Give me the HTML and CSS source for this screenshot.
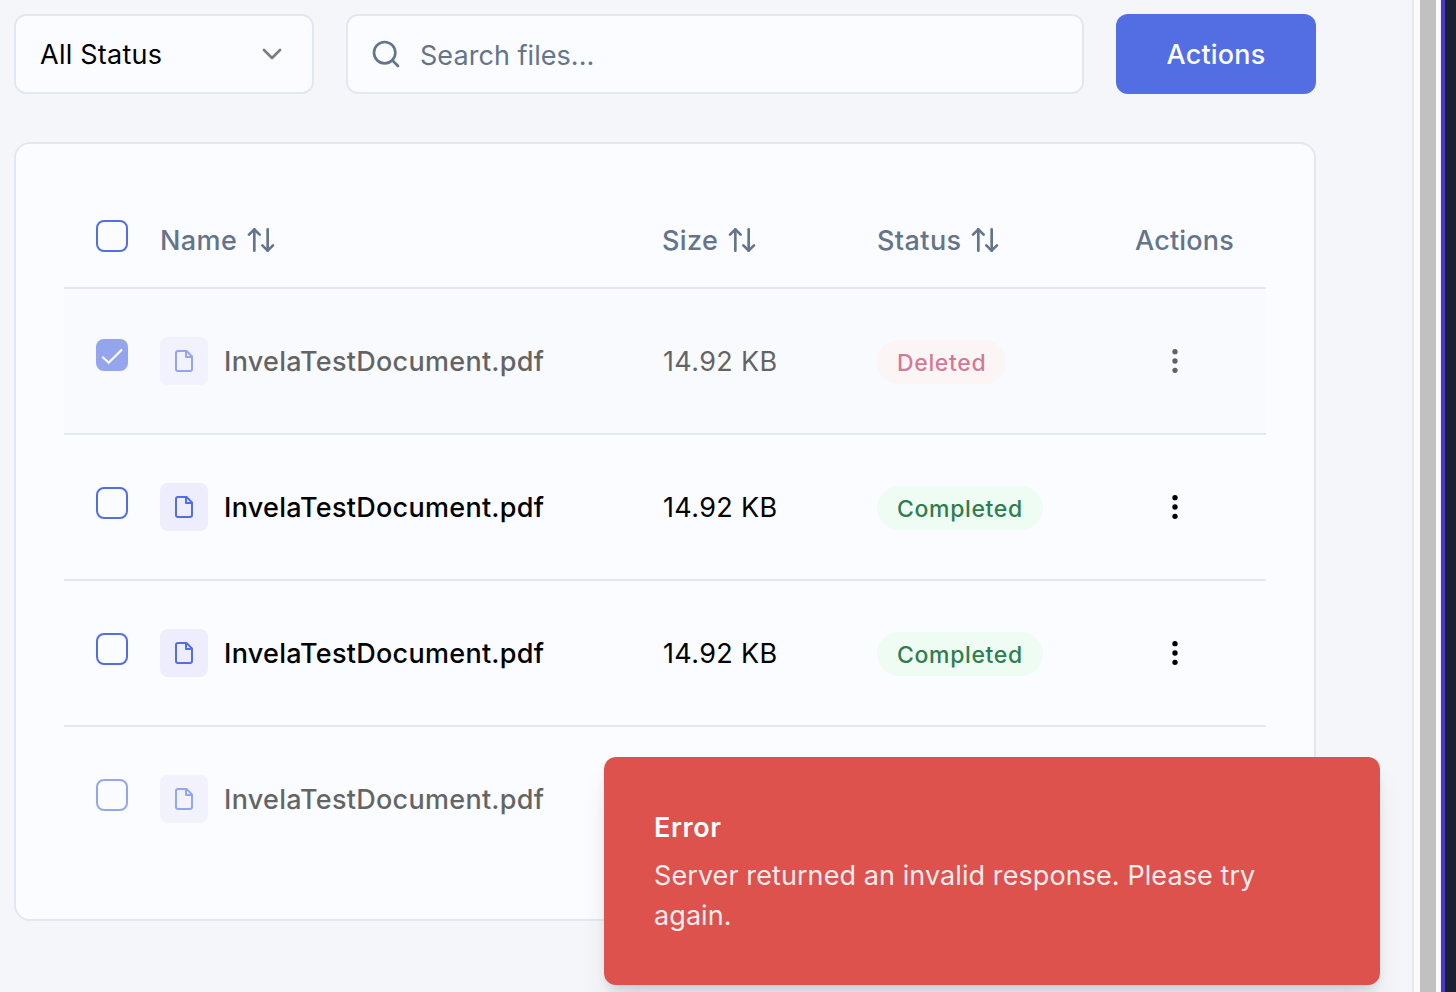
FILE: index.html
```
<!DOCTYPE html>
<html lang="en">
<head>
<meta charset="utf-8">
<title>Files</title>
<link rel="stylesheet" href="styles.css">
</head>
<body>
<svg class="sprite" aria-hidden="true">
  <symbol id="sort" viewBox="0 0 24 24"><path d="m21 16-4 4-4-4"/><path d="M17 20V4"/><path d="m3 8 4-4 4 4"/><path d="M7 4v16"/></symbol>
  <symbol id="file" viewBox="0 0 24 24"><path d="M14.5 2H6a2 2 0 0 0-2 2v16a2 2 0 0 0 2 2h12a2 2 0 0 0 2-2V7.5L14.5 2z"/><path d="M14 2v6h6"/></symbol>
  <symbol id="more" viewBox="0 0 24 24"><circle cx="12" cy="12" r="1"/><circle cx="12" cy="5" r="1"/><circle cx="12" cy="19" r="1"/></symbol>
</svg>
<div class="frame">
  <main class="page">
    <div class="toolbar">
      <div class="select"><span class="label">All Status</span><svg class="icon chevron" viewBox="0 0 24 24"><path d="m6 9 6 6 6-6"/></svg></div>
      <div class="search"><svg class="icon" viewBox="0 0 24 24"><circle cx="11" cy="11" r="8"/><path d="m21 21-4.3-4.3"/></svg><span class="placeholder">Search files...</span></div>
      <button class="button">Actions</button>
    </div>
    <section class="card">
      <div class="row head">
        <div class="check-cell"><span class="checkbox"></span></div>
        <div class="cell sortable"><span class="label">Name</span><svg class="icon sort"><use href="#sort"/></svg></div>
        <div class="cell sortable"><span class="label">Size</span><svg class="icon sort"><use href="#sort"/></svg></div>
        <div class="cell sortable"><span class="label">Status</span><svg class="icon sort"><use href="#sort"/></svg></div>
        <div class="cell"><span class="label">Actions</span></div>
      </div>
      <div class="row selected">
        <div class="check-cell dim"><span class="checkbox checked"><svg class="tick" viewBox="0 0 32 32"><path d="M6.3 17.7l6.4 6.1L26 10.5"/></svg></span></div>
        <div class="cell dim"><span class="file"><svg class="file-icon"><use href="#file"/></svg></span><span class="label name">InvelaTestDocument.pdf</span></div>
        <div class="cell size dim"><span class="label">14.92 KB</span></div>
        <div class="cell dim"><span class="pill deleted">Deleted</span></div>
        <div class="cell menu dim"><svg class="more"><use href="#more"/></svg></div>
      </div>
      <div class="row">
        <div class="check-cell"><span class="checkbox"></span></div>
        <div class="cell"><span class="file"><svg class="file-icon"><use href="#file"/></svg></span><span class="label name">InvelaTestDocument.pdf</span></div>
        <div class="cell size"><span class="label">14.92 KB</span></div>
        <div class="cell"><span class="pill completed">Completed</span></div>
        <div class="cell menu"><svg class="more"><use href="#more"/></svg></div>
      </div>
      <div class="row">
        <div class="check-cell"><span class="checkbox"></span></div>
        <div class="cell"><span class="file"><svg class="file-icon"><use href="#file"/></svg></span><span class="label name">InvelaTestDocument.pdf</span></div>
        <div class="cell size"><span class="label">14.92 KB</span></div>
        <div class="cell"><span class="pill completed">Completed</span></div>
        <div class="cell menu"><svg class="more"><use href="#more"/></svg></div>
      </div>
      <div class="row last">
        <div class="check-cell dim"><span class="checkbox"></span></div>
        <div class="cell dim"><span class="file"><svg class="file-icon"><use href="#file"/></svg></span><span class="label name">InvelaTestDocument.pdf</span></div>
      </div>
    </section>
  </main>
  <div class="scrollbar"><div class="thumb"></div></div>
  <div class="edge"></div>
  <div class="toast" role="alert">
    <div class="toast-title">Error</div>
    <div class="toast-text">Server returned an invalid response. Please try again.</div>
  </div>
</div>
</body>
</html>
```
FILE: styles.css
```
* { box-sizing: border-box; }
body { margin: 0; font-family: Inter, sans-serif; font-size: 27px; line-height: 40px; letter-spacing: .25px; color: #000; }
.sprite { position: absolute; width: 0; height: 0; }
.frame { position: relative; display: flex; width: 1456px; height: 992px; overflow: hidden; background: #f5f6fa; }
.page { flex: 1; padding: 14px 96px 0 14px; }
svg { fill: none; stroke: currentColor; stroke-width: 2; stroke-linecap: round; stroke-linejoin: round; flex: none; }
.icon { width: 32px; height: 32px; }
.label { padding-top: 2px; }
.toolbar { display: flex; gap: 32px; height: 80px; margin-bottom: 48px; }
.select, .search { display: flex; align-items: center; background: #fbfcff; border: 2px solid #e2e8f0; border-radius: 12px; }
.select { width: 300px; justify-content: space-between; padding: 0 24px; }
.chevron { opacity: .5; }
.search { flex: 1; gap: 18px; padding: 0 22px; color: #64748b; }
.placeholder { padding-top: 4px; letter-spacing: .05px; }
.button { width: 200px; padding: 2px 0 0; border: 0; border-radius: 12px; background: #536de3; color: #fbfcff; font: 500 27px/40px Inter, sans-serif; letter-spacing: .2px; }
.card { height: 779px; padding: 48px; background: #fbfcff; border: 2px solid #e2e8f0; border-radius: 16px; }
.row { display: grid; grid-template-columns: 96px 502px 215px 258px 131px; height: 146px; border-bottom: 2px solid #e2e8f0; }
.row.head { height: 97px; color: #64748b; font-weight: 500; letter-spacing: .2px; }
.head .sortable { letter-spacing: .4px; }
.row.last { height: 144px; border-bottom: 0; }
.row.selected { background: #f9fafd; }
.cell { display: flex; align-items: center; }
.check-cell { display: flex; align-items: center; padding: 0 0 8px 32px; }
.selected .check-cell { padding-bottom: 12px; }
.head .check-cell { padding-bottom: 7px; }
.checkbox { width: 32px; height: 32px; border: 2px solid #536de3; border-radius: 8px; }
.checked { border: 0; background: #536de3; color: #fff; }
.tick { display: block; width: 32px; height: 32px; stroke-width: 2.2; stroke-linecap: butt; stroke-linejoin: miter; }
.dim { opacity: .6; }
.sort { margin-left: 8px; }
.file { display: flex; align-items: center; justify-content: center; width: 48px; height: 48px; margin-right: 16px; background: #ededfd; border-radius: 8px; color: #536de3; }
.file-icon { width: 24px; height: 24px; }
.name { font-weight: 500; letter-spacing: .28px; }
.size { padding-left: 1px; letter-spacing: .35px; }
.pill { height: 44px; padding: 3px 20px 0; margin-top: 2px; border-radius: 22px; font-size: 23px; font-weight: 500; letter-spacing: .65px; }
.deleted { background: #fef2f2; color: #be2352; }
.completed { background: #effcf4; color: #2f7d4f; }
.menu { padding-left: 24px; }
.more { width: 32px; height: 32px; }
.scrollbar { width: 29px; padding: 0 4px 0 6px; background: #fbfbfb; border-left: 2px solid #e8e8e8; border-right: 1px solid #ececf2; }
.thumb { height: 100%; background: #c1c1c1; }
.edge { width: 15px; background: #1b2130; border-left: 4px solid #4d38c4; }
.toast { position: absolute; left: 604px; top: 757px; width: 776px; height: 228px; padding: 51px 50px 49px; border-radius: 12px; background: #dd524c; color: #fbfcff; box-shadow: 0 20px 30px -6px rgba(0,0,0,.1), 0 8px 12px -4px rgba(0,0,0,.1); }
.toast-title { margin-bottom: 8px; font-weight: 600; letter-spacing: .6px; }
.toast-text { opacity: .9; letter-spacing: .08px; }
```
